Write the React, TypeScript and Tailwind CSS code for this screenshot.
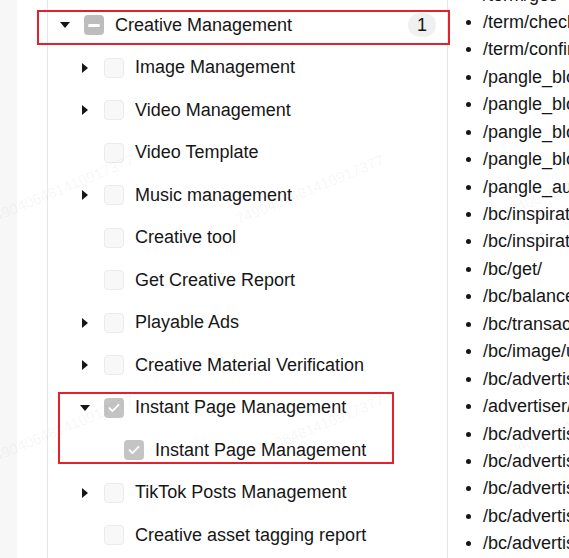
import React from "react"

type Box = "none" | "half" | "checked"
type Row = {
  label: string
  level: number
  caret?: "right" | "down"
  box: Box
  count?: number
}

const rows: Row[] = [
  { label: "Creative Management", level: 0, caret: "down", box: "half", count: 1 },
  { label: "Image Management", level: 1, caret: "right", box: "none" },
  { label: "Video Management", level: 1, caret: "right", box: "none" },
  { label: "Video Template", level: 1, box: "none" },
  { label: "Music management", level: 1, caret: "right", box: "none" },
  { label: "Creative tool", level: 1, box: "none" },
  { label: "Get Creative Report", level: 1, box: "none" },
  { label: "Playable Ads", level: 1, caret: "right", box: "none" },
  { label: "Creative Material Verification", level: 1, caret: "right", box: "none" },
  { label: "Instant Page Management", level: 1, caret: "down", box: "checked" },
  { label: "Instant Page Management", level: 2, box: "checked" },
  { label: "TikTok Posts Management", level: 1, caret: "right", box: "none" },
  { label: "Creative asset tagging report", level: 1, box: "none" },
]

const endpoints = [
  "/term/get/",
  "/term/check/",
  "/term/confirm/",
  "/pangle_block_list/get/",
  "/pangle_block_list/update/",
  "/pangle_block_list/check/",
  "/pangle_block_list/delete/",
  "/pangle_audience_package/get/",
  "/bc/inspiration/get/",
  "/bc/inspiration/list/",
  "/bc/get/",
  "/bc/balance/get/",
  "/bc/transaction/get/",
  "/bc/image/upload/",
  "/bc/advertiser/create/",
  "/advertiser/update/",
  "/bc/advertiser/qualification/",
  "/bc/advertiser/disable/",
  "/bc/advertiser/unionpay_info/",
  "/bc/advertiser/attribute/",
  "/bc/advertiser/transfer/",
]

const marks = [
  { x: 60, y: 190 },
  { x: 310, y: 190 },
  { x: 560, y: 190 },
  { x: 60, y: 430 },
  { x: 310, y: 430 },
  { x: 560, y: 430 },
]

function Caret({ dir }: { dir?: "right" | "down" }) {
  return (
    <span className="flex h-[20px] w-[20px] shrink-0 items-center justify-center">
      {dir === "down" && (
        <svg width="10" height="6" viewBox="0 0 10 6" aria-hidden>
          <path d="M0 0h10L5 6z" fill="#161616" />
        </svg>
      )}
      {dir === "right" && (
        <svg width="6" height="10" viewBox="0 0 6 10" aria-hidden>
          <path d="M0 0l6 5-6 5z" fill="#161616" />
        </svg>
      )}
    </span>
  )
}

function Check({ box }: { box: Box }) {
  if (box === "half")
    return (
      <span className="ml-[9px] flex h-[20px] w-[20px] shrink-0 items-center justify-center rounded-[4px] bg-[#bdbdbd]">
        <span className="h-[2.5px] w-[12px] rounded-full bg-white" />
      </span>
    )
  if (box === "checked")
    return (
      <span className="ml-[9px] flex h-[20px] w-[20px] shrink-0 items-center justify-center rounded-[4px] bg-[#c4c4c4]">
        <svg width="12" height="10" viewBox="0 0 12 10" fill="none" aria-hidden>
          <path d="M1.5 5.2l3 3 6-6.4" stroke="#fff" strokeWidth="1.8" strokeLinecap="round" strokeLinejoin="round" />
        </svg>
      </span>
    )
  return (
    <span className="ml-[9px] block h-[20px] w-[20px] shrink-0 rounded-[4px] border border-[#ebebeb] bg-[#f8f8f8]" />
  )
}

export default function App() {
  return (
    <div className="relative flex h-[558px] w-[569px] overflow-hidden bg-white font-['Liberation_Sans',Arial,sans-serif] text-[18px] text-[#161616]">
      <div className="w-[17px] shrink-0 bg-[#f7f7f7]" />
      <div className="w-[30px] shrink-0" />

      {/* tree of permissions */}
      <div className="flex w-[401px] shrink-0 flex-col border-x border-[#e6e6e6] pt-[4px]">
        {rows.map((r, i) => (
          <div
            key={i}
            className="flex h-[42.5px] shrink-0 items-center pr-[11px]"
            style={{ paddingLeft: 7 + r.level * 20 }}
          >
            <Caret dir={r.caret} />
            <Check box={r.box} />
            <span className="ml-[11px] whitespace-nowrap">{r.label}</span>
            {r.count !== undefined && (
              <span className="ml-auto flex h-[24px] w-[28px] items-center justify-center rounded-full bg-[#f0f0f0]">
                {r.count}
              </span>
            )}
          </div>
        ))}
      </div>

      {/* api list */}
      <ul className="mt-[-18.7px] min-w-0 flex-1 overflow-hidden">
        {endpoints.map((e, i) => (
          <li key={i} className="flex h-[27.45px] items-center whitespace-nowrap pl-[18px]">
            <span className="h-[5px] w-[5px] shrink-0 rounded-full bg-[#161616]" />
            <span className="ml-[12px]">{e}</span>
          </li>
        ))}
      </ul>

      {/* watermark */}
      {marks.map((m, i) => (
        <span
          key={i}
          className="pointer-events-none absolute -translate-x-1/2 -translate-y-1/2 rotate-[-22.5deg] whitespace-nowrap text-[15px] text-[#000]/[0.05]"
          style={{ left: m.x, top: m.y }}
        >
          7490406481410917377
        </span>
      ))}

      {/* highlight boxes */}
      <div className="pointer-events-none absolute left-[37px] top-[10px] h-[35px] w-[413px] border-2 border-[#e3202b]" />
      <div className="pointer-events-none absolute left-[58px] top-[392px] h-[72px] w-[336px] border-2 border-[#e3202b]" />
    </div>
  )
}
